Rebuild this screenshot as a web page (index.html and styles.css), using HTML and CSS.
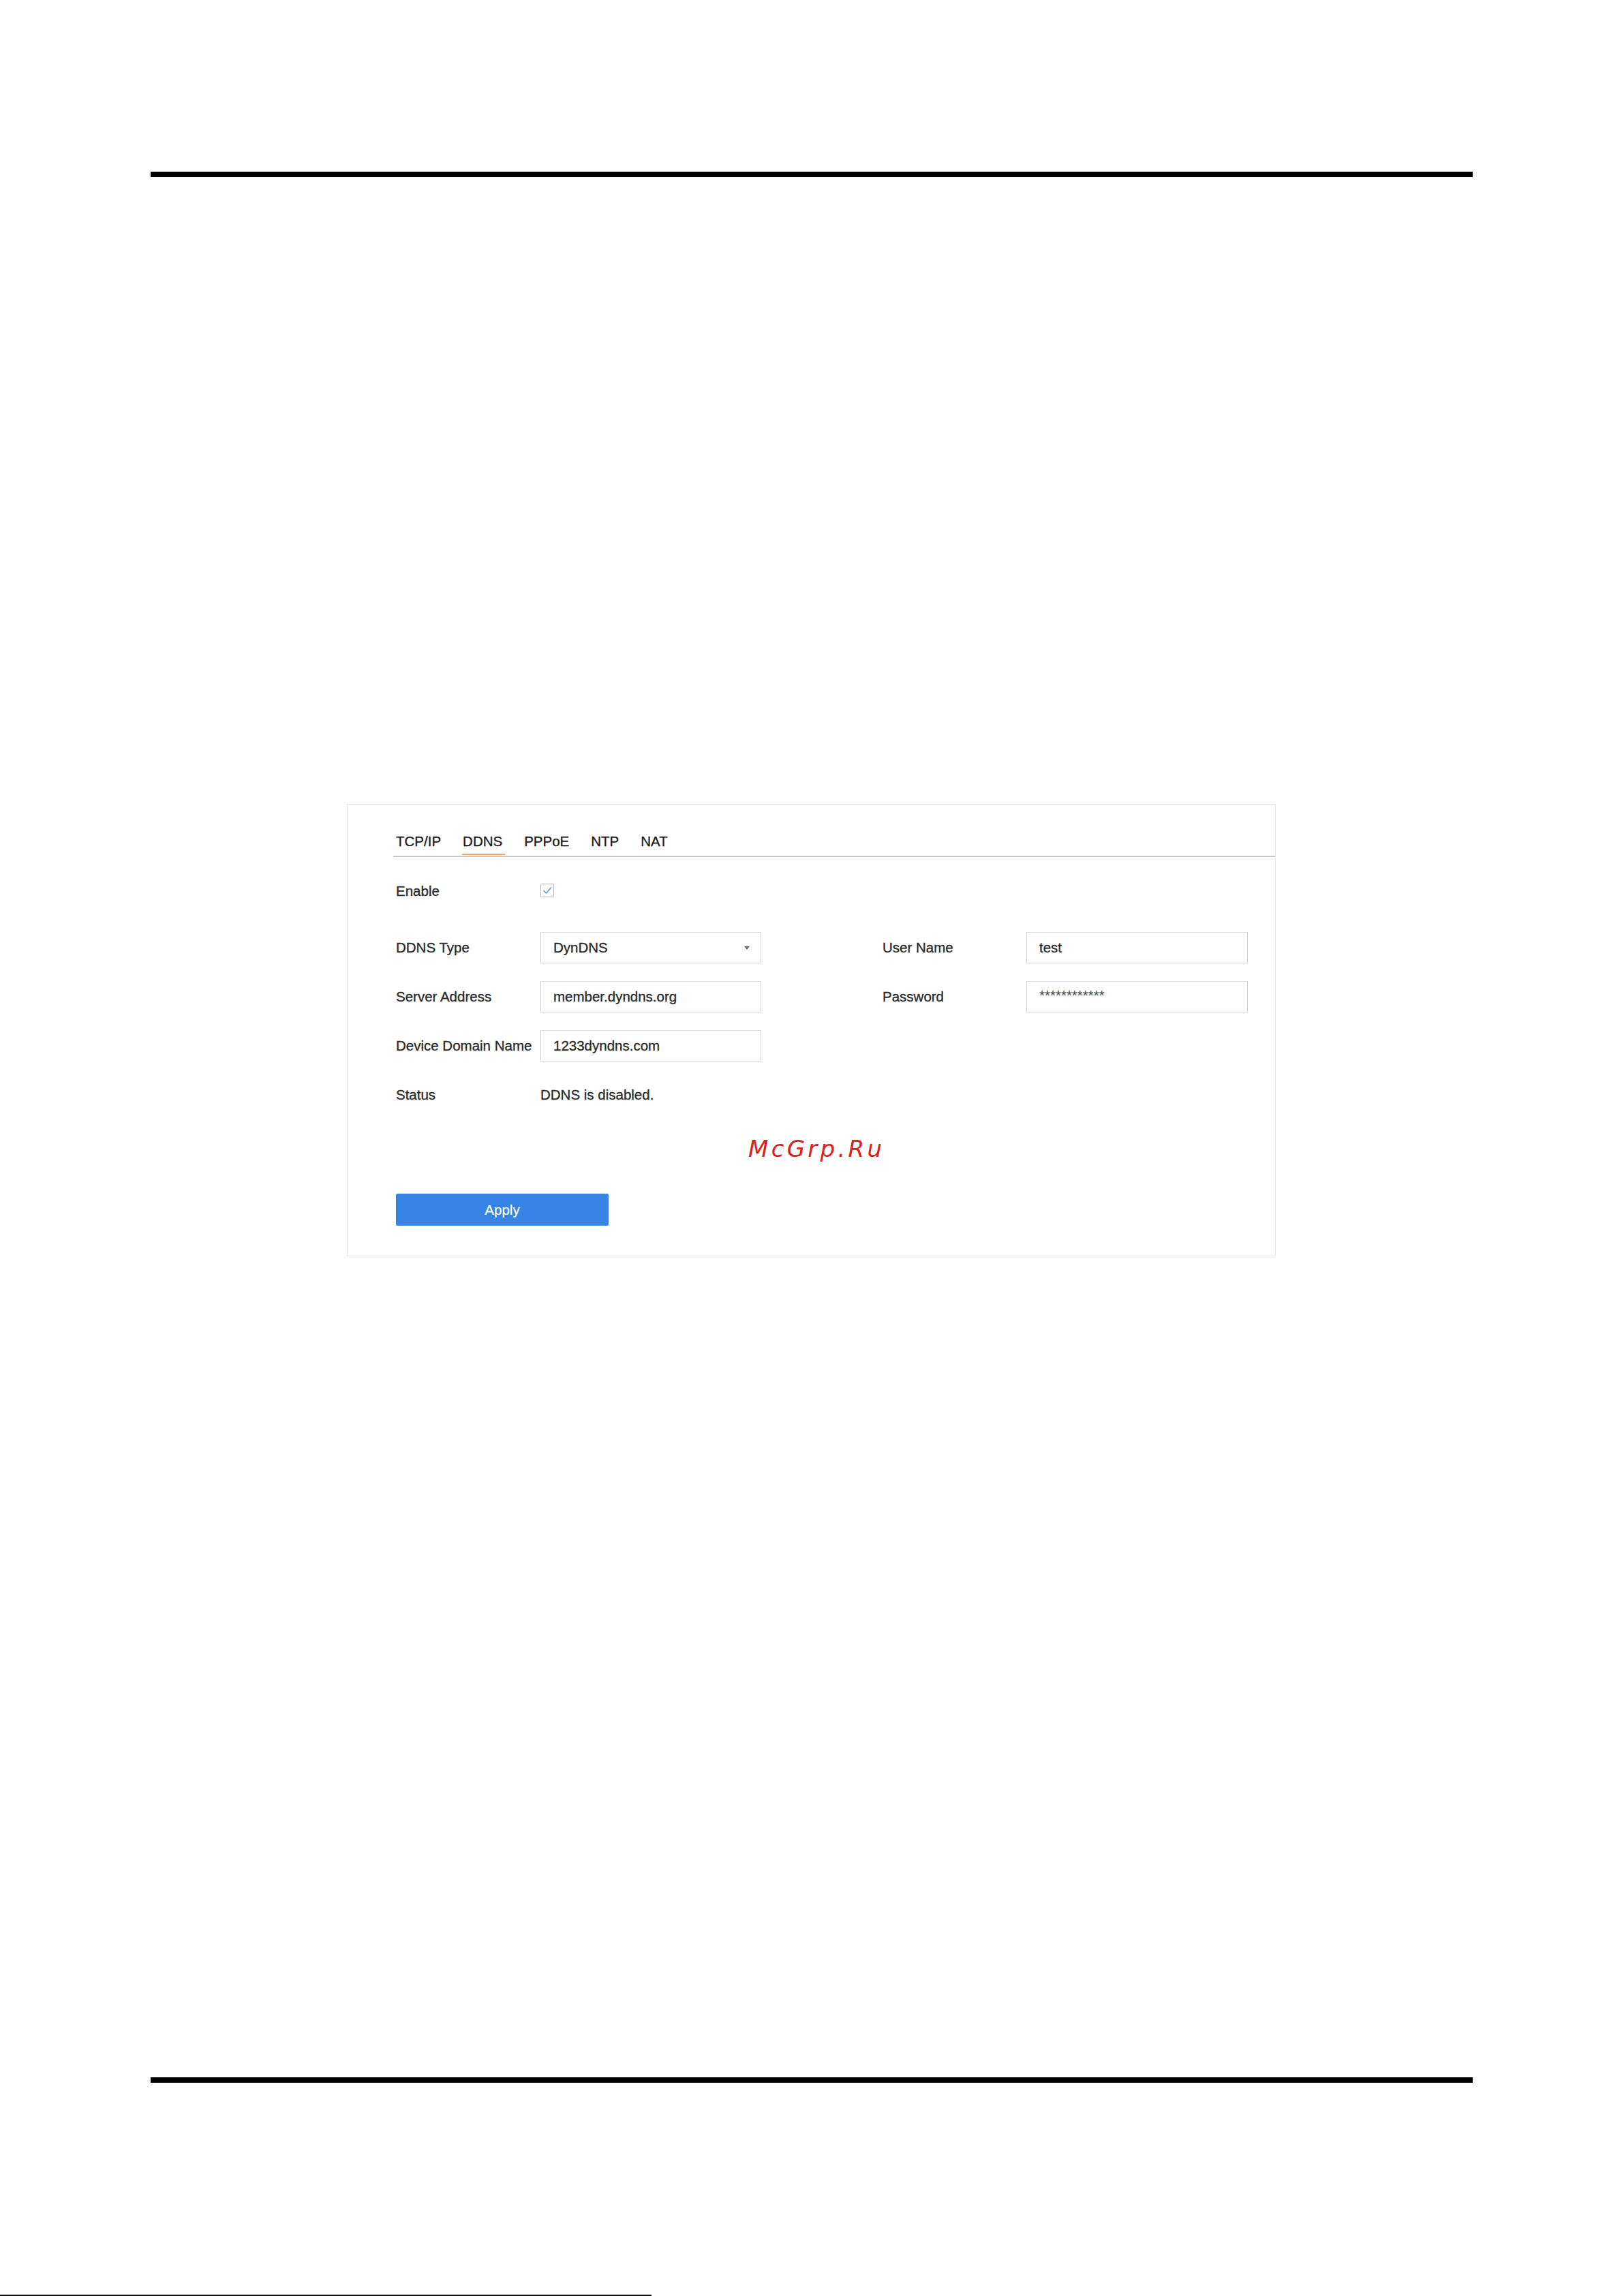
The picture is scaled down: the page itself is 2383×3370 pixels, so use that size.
FILE: index.html
```html
<!DOCTYPE html>
<html lang="en">
<head>
<meta charset="utf-8">
<title>DDNS Settings</title>
<link rel="stylesheet" href="styles.css">
</head>
<body>
<div class="page">
  <div class="rule-top"></div>

  <section class="panel">
    <nav class="tabs">
      <span class="tab">TCP/IP</span>
      <span class="tab active">DDNS</span>
      <span class="tab">PPPoE</span>
      <span class="tab">NTP</span>
      <span class="tab">NAT</span>
    </nav>

    <div class="form">
      <div class="row row-enable">
        <div class="pair">
          <span class="label">Enable</span>
          <span class="checkbox">
            <svg width="14" height="12" viewBox="0 0 14 12"><path d="M2 6.5 L5.5 10 L12.5 2" fill="none" stroke="#5a9ae6" stroke-width="1.6" stroke-linecap="round" stroke-linejoin="round"/></svg>
          </span>
        </div>
      </div>

      <div class="row">
        <div class="pair">
          <span class="label">DDNS Type</span>
          <div class="input select"><span>DynDNS</span><span class="caret"></span></div>
        </div>
        <div class="pair pair-right">
          <span class="label label-right">User Name</span>
          <div class="input input-right">test</div>
        </div>
      </div>

      <div class="row">
        <div class="pair">
          <span class="label">Server Address</span>
          <div class="input">member.dyndns.org</div>
        </div>
        <div class="pair pair-right">
          <span class="label label-right">Password</span>
          <div class="input input-right pw">************</div>
        </div>
      </div>

      <div class="row">
        <div class="pair">
          <span class="label">Device Domain Name</span>
          <div class="input">1233dyndns.com</div>
        </div>
      </div>

      <div class="row">
        <div class="pair">
          <span class="label">Status</span>
          <span class="value">DDNS is disabled.</span>
        </div>
      </div>

      <div class="watermark">McGrp.Ru</div>

      <button class="apply" type="button">Apply</button>
    </div>
  </section>

  <div class="rule-bottom"></div>
  <div class="edge-line"></div>
</div>
</body>
</html>
```

FILE: styles.css
```css
html, body {
  margin: 0;
  padding: 0;
  background: #ffffff;
  overflow: hidden;
}

body {
  width: 2383px;
  height: 3370px;
  font-family: "Liberation Sans", Arial, sans-serif;
  color: #2a2a2a;
}

.page {
  padding-top: 252px;
}

.rule-top {
  height: 8px;
  margin: 0 222px 0 221px;
  background: #000000;
}

.panel {
  margin: 920px 0 0 509px;
  width: 1361px;
  border: 1px solid #e6e6e6;
  background: #ffffff;
  -webkit-text-stroke: 0.35px currentColor;
}

.tabs {
  display: flex;
  gap: 32px;
  margin: 42px 0 0 67px;
  padding-left: 4px;
  border-bottom: 2px solid #c9c9c9;
  font-size: 20.5px;
  line-height: 24px;
  color: #1c1c1c;
}

.tab {
  padding-bottom: 6px;
  border-bottom: 2px solid transparent;
  margin-bottom: 1px;
}

.tab.active {
  border-bottom-color: #f5a063;
  padding: 0 4px 6px 1px;
  margin: 0 -4px 1px -1px;
}

.form {
  padding: 27px 0 44px 71px;
  font-size: 20.5px;
  line-height: 24px;
}

.row {
  display: flex;
  align-items: center;
  height: 46px;
  margin-bottom: 26px;
}

.row-enable {
  margin-bottom: 37px;
}

.pair {
  display: flex;
  align-items: center;
}

.pair-right {
  margin-left: 178px;
}

.label {
  width: 212px;
  color: #2a2a2a;
}

.label-right {
  width: 211px;
}

.checkbox {
  width: 18px;
  height: 18px;
  border: 1px solid #bdbdbd;
  border-radius: 1px;
  display: flex;
  align-items: center;
  justify-content: center;
  margin-top: -2px;
  -webkit-text-stroke: 0;
}

.input {
  box-sizing: border-box;
  width: 324px;
  height: 46px;
  border: 1px solid #dadada;
  box-shadow: 0 1px 1px rgba(0, 0, 0, 0.04);
  padding: 0 16px 0 18px;
  display: flex;
  align-items: center;
  color: #2a2a2a;
}

.input-right {
  width: 325px;
}

.pw {
  align-items: flex-start;
  padding-top: 8px;
  -webkit-text-stroke: 0;
  color: #444444;
}

.select {
  justify-content: space-between;
}

.caret {
  width: 0;
  height: 0;
  border-left: 4.5px solid transparent;
  border-right: 4.5px solid transparent;
  border-top: 5px solid #666666;
}

.value {
  color: #2a2a2a;
}

.watermark {
  margin: 36px 0 0 517px;
  font-family: "DejaVu Sans", sans-serif;
  font-style: italic;
  font-size: 34px;
  line-height: 40px;
  letter-spacing: 4.3px;
  color: #d92121;
  -webkit-text-stroke: 0;
}

.apply {
  display: block;
  margin-top: 46px;
  width: 312px;
  height: 47px;
  border: none;
  border-radius: 2px;
  background: #3784e6;
  color: #ffffff;
  font-family: "Liberation Sans", Arial, sans-serif;
  font-size: 20.5px;
  padding: 0;
  -webkit-text-stroke: 0.2px #ffffff;
}

.rule-bottom {
  height: 8px;
  margin: 1205px 222px 0 221px;
  background: #000000;
}

.edge-line {
  margin-top: 311px;
  width: 956px;
  height: 2px;
  background: #111111;
}
```
